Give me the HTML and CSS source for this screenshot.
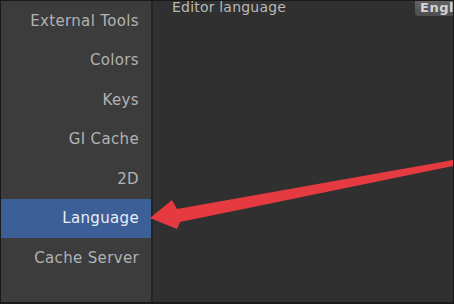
FILE: index.html
```html
<!DOCTYPE html>
<html>
<head>
<meta charset="utf-8">
<link rel="stylesheet" href="styles.css">
</head>
<body>
<div class="window">
  <nav class="sidebar">
    <div class="item">External Tools</div>
    <div class="item">Colors</div>
    <div class="item">Keys</div>
    <div class="item">GI Cache</div>
    <div class="item">2D</div>
    <div class="item active">Language</div>
    <div class="item">Cache Server</div>
  </nav>
  <main class="content">
    <div class="row">
      <span class="label">Editor language</span>
      <span class="dropdown">English</span>
    </div>
  </main>
  <svg class="arrow" width="454" height="304" viewBox="0 0 454 304">
    <polygon points="150,218 172,200 177,209 453,160 453,166 180,222 177,229" fill="#e43a40"/>
  </svg>
</div>
</body>
</html>
```
FILE: styles.css
```css
html, body {
  margin: 0;
  padding: 0;
  background: #1c1c1c;
}
.window {
  position: relative;
  width: 454px;
  height: 304px;
  box-sizing: border-box;
  border: 1px solid #1a1a1a;
  border-bottom-width: 2px;
  display: flex;
  overflow: hidden;
  font-family: "DejaVu Sans", sans-serif;
}
.sidebar {
  width: 150px;
  flex: none;
  background: #3c3c3c;
  border-right: 2px solid #242424;
  display: flex;
  flex-direction: column;
}
.item {
  height: 39.5px;
  flex: none;
  display: flex;
  align-items: center;
  justify-content: flex-end;
  padding-right: 12px;
  font-size: 15px;
  letter-spacing: 0.35px;
  color: #b2b2b2;
}
.item.active {
  background: #3d5f98;
  color: #e8eef6;
}
.content {
  flex: 1;
  background: #303030;
  position: relative;
}
.row {
  display: flex;
  justify-content: space-between;
  align-items: flex-start;
  padding-left: 19px;
}
.label {
  font-size: 14px;
  letter-spacing: 0.2px;
  color: #b8b8b8;
  line-height: 15px;
  margin-top: -1px;
}
.dropdown {
  width: 38px;
  height: 15px;
  overflow: hidden;
  white-space: nowrap;
  background: linear-gradient(#636363, #4e4e4e);
  border-radius: 0 0 0 3px;
  color: #d4d4d4;
  font-size: 13px;
  font-weight: bold;
  letter-spacing: 0.5px;
  line-height: 14px;
  padding-left: 5px;
  box-sizing: border-box;
}
.arrow {
  position: absolute;
  left: -1px;
  top: -1px;
  pointer-events: none;
}
```
